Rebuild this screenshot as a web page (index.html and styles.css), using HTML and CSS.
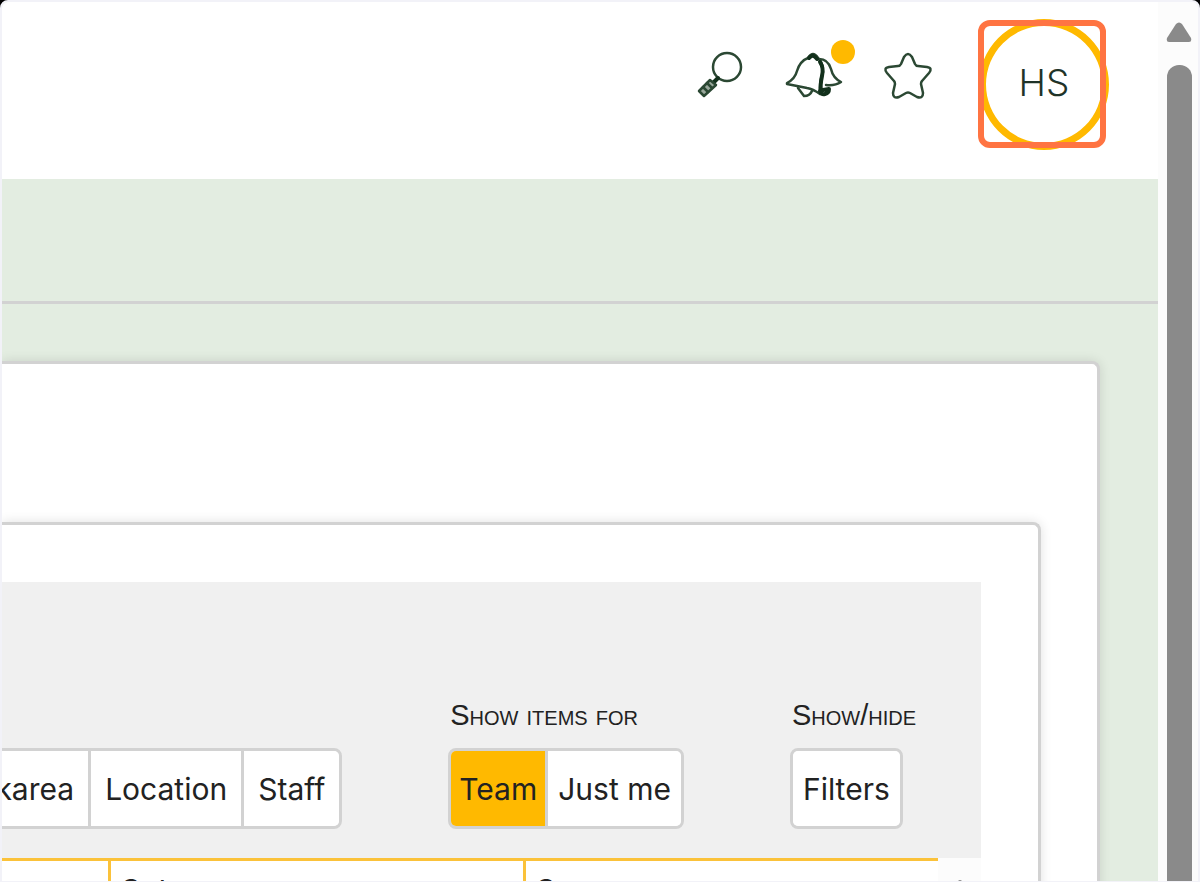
FILE: index.html
```html
<!DOCTYPE html>
<html lang="en">
<head>
<meta charset="utf-8">
<title>Dashboard</title>
<link rel="stylesheet" href="styles.css">
</head>
<body>
<div class="window">
  <div class="page">
    <header class="header">
      <nav class="actions" aria-label="Tools">
        <button class="icon-button" aria-label="Search">
          <svg class="icon" width="48" height="48" viewBox="0 0 48 48">
            <circle cx="31" cy="16" r="14"/>
            <path class="icon-heavy" d="M22 27l-5 5"/>
            <path class="icon-grip" d="M14 29l6 5L8 45l-5-5z"/>
            <path d="M11 32l5 5M7 36l5 5"/>
          </svg>
        </button>
        <button class="icon-button" aria-label="Notifications">
          <svg class="icon" width="56" height="48" viewBox="0 0 56 48">
            <path d="M1 32q8-4 10-12Q14 10 22 7q5-8 10 0 5 4 5 14-4 10-3 22-7-5-13-6L1 33z"/>
            <path d="M33 8q9 0 12 10 2 9 10 13-6 4-15 3"/>
            <path d="M12 37l6 8q6 0 8-5"/>
            <path class="icon-heavy" d="M23 7q4-5 8 1M34 11q4 6 2 14-2 9-1 16M34 40q1 4 5 3 4-1 4-5l-6 1"/>
          </svg>
          <span class="badge"></span>
        </button>
        <button class="icon-button" aria-label="Favourites">
          <svg class="icon" width="48" height="48" viewBox="0 0 48 48">
            <path d="M20 6Q24 0 28 6L31 13Q32 15 34 15L43 16Q49 17 45 22L38 30Q37 31 37 33L39 42Q39 48 33 46L26 42Q24 41 22 42L15 46Q9 48 9 42L11 33Q11 31 10 30L3 22Q-1 17 5 16L14 15Q16 15 17 13Z"/>
          </svg>
        </button>
      </nav>
      <button class="account"><span class="avatar">HS</span></button>
    </header>
    <div class="subheader"></div>
    <main class="content">
      <section class="panel panel-outer">
        <section class="panel panel-inner">
          <div class="toolbar">
            <div class="group">
              <div class="segments segments-wide">
                <button class="segment">Workarea</button>
                <button class="segment">Location</button>
                <button class="segment">Staff</button>
              </div>
            </div>
            <div class="group" role="group" aria-labelledby="items-label">
              <span class="group-label" id="items-label">Show items for</span>
              <div class="segments">
                <button class="segment segment-active" aria-pressed="true">Team</button>
                <button class="segment" aria-pressed="false">Just me</button>
              </div>
            </div>
            <div class="group" role="group" aria-labelledby="hide-label">
              <span class="group-label" id="hide-label">Show/hide</span>
              <div class="segments">
                <button class="segment">Filters</button>
              </div>
            </div>
          </div>
          <div class="table-area">
            <table class="table">
              <thead><tr><th></th><th>Category</th><th>Case</th></tr></thead>
            </table>
            <div class="table-scroll">
              <svg class="scroll-arrow" width="16" height="12" viewBox="0 0 16 12"><path d="M6 1q2-2 4 0l6 9q0 2-2 2H2q-2 0-2-2z"/></svg>
            </div>
          </div>
        </section>
      </section>
    </main>
  </div>
  <div class="scrollbar">
    <svg class="scroll-arrow" width="26" height="20" viewBox="0 0 26 20"><path d="M10 2q3-3 6 0l9 14q1 4-2 4H3q-3 0-2-4z"/></svg>
    <div class="scroll-thumb"></div>
  </div>
</div>
</body>
</html>
```
FILE: styles.css
```css
* { box-sizing: border-box; }

html { background: #000; }

body {
  margin: 0;
  font-family: Inter, "Liberation Sans", sans-serif;
  font-size: 30px;
  line-height: 36px;
  color: #222;
}

button {
  font: inherit;
  color: inherit;
  background: #fff;
  border: 0;
  padding: 0;
}

.window {
  display: flex;
  height: 100vh;
  overflow: hidden;
  border: 2px solid #f2f2f8;
  border-bottom-width: 1px;
  border-radius: 8px 8px 0 0;
  background: #fcfcfc;
}

.page {
  flex: 1;
  min-width: 0;
  display: flex;
  flex-direction: column;
  overflow: hidden;
  background: #e3ede1;
}

.header {
  flex: none;
  display: flex;
  justify-content: flex-end;
  align-items: flex-start;
  gap: 46px;
  height: 177px;
  padding: 18px 52px 0 0;
  background: #fff;
}

.actions {
  display: flex;
  gap: 42px;
  padding-top: 31px;
}

.icon-button { display: flex; position: relative; }

.icon {
  overflow: visible;
  fill: none;
  stroke: #2b4833;
  stroke-width: 2.5;
  stroke-linejoin: round;
  stroke-linecap: round;
}

.icon-grip { fill: #9aa89c; }
.icon-heavy { stroke: #12301b; stroke-width: 4; }

.badge {
  position: absolute;
  top: -11px;
  right: -13px;
  width: 24px;
  height: 24px;
  border-radius: 50%;
  background: #ffb900;
}

.account {
  position: relative;
  width: 128px;
  height: 128px;
}

.account::after {
  content: "";
  position: absolute;
  inset: 0;
  border: 6px solid #ff7442;
  border-radius: 12px;
}

.avatar {
  position: absolute;
  top: -1px;
  left: 1px;
  display: flex;
  align-items: center;
  justify-content: center;
  width: 130px;
  height: 131px;
  padding-bottom: 4px;
  border: 7px solid #ffb900;
  border-radius: 50%;
  font-size: 37px;
  font-weight: 300;
  color: #1f3328;
}

.subheader {
  flex: none;
  height: 125px;
  border-bottom: 3px solid #d2d2d2;
}

.content {
  flex: 1;
  display: flex;
  padding: 57px 58px 0 0;
}

.panel {
  flex: 1;
  min-width: 0;
  border: 3px solid #d2d2d2;
  border-width: 3px 3px 0 0;
  border-radius: 0 8px 0 0;
  background: #fff;
  box-shadow: 0 0 12px rgba(0, 0, 0, 0.12);
}

.panel-outer {
  display: flex;
  padding: 158px 56px 0 0;
}

.panel-inner { padding: 57px 57px 0 0; }

.toolbar {
  display: flex;
  justify-content: flex-end;
  align-items: flex-end;
  gap: 106px;
  height: 276px;
  padding: 0 65px 29px 0;
  overflow: hidden;
  background: #f0f0f0;
}

.group {
  flex: none;
  display: flex;
  flex-direction: column;
  align-items: flex-start;
  gap: 15px;
}

.group-label {
  padding-left: 2px;
  font-family: "Liberation Sans", sans-serif;
  font-size: 29px;
  font-variant: small-caps;
}

.segments {
  display: flex;
  border: 3px solid #d2d2d2;
  border-radius: 8px;
  overflow: hidden;
}

.segment {
  height: 75px;
  padding: 0 10px;
}

.segment + .segment { border-left: 3px solid #d2d2d2; }

.segments-wide .segment { padding: 0 14px; }

.segments .segment-active {
  padding: 0 8px;
  background: #ffb900;
}

.table-area { display: flex; }

.table {
  flex: 1;
  table-layout: fixed;
  border-collapse: collapse;
  border-top: 3px solid #fbc23a;
}

.table th {
  height: 60px;
  padding: 11px 9px 0;
  text-align: left;
  font-weight: 400;
  vertical-align: top;
}

.table th:first-child { width: 107px; }
.table th:nth-child(2) { width: 415px; }
.table th + th { border-left: 3px solid #fbc23a; }

.table-scroll {
  display: flex;
  justify-content: center;
  width: 43px;
  padding-top: 22px;
  background: #fcfcfc;
}

.scrollbar {
  flex: none;
  display: flex;
  flex-direction: column;
  align-items: center;
  gap: 23px;
  width: 40px;
  padding: 20px 0 0 2px;
}

.scroll-arrow { flex: none; fill: #8a8a8a; }

.scroll-thumb {
  flex: 1;
  width: 25px;
  border-radius: 12px 12px 0 0;
  background: #8a8a8a;
}
```
